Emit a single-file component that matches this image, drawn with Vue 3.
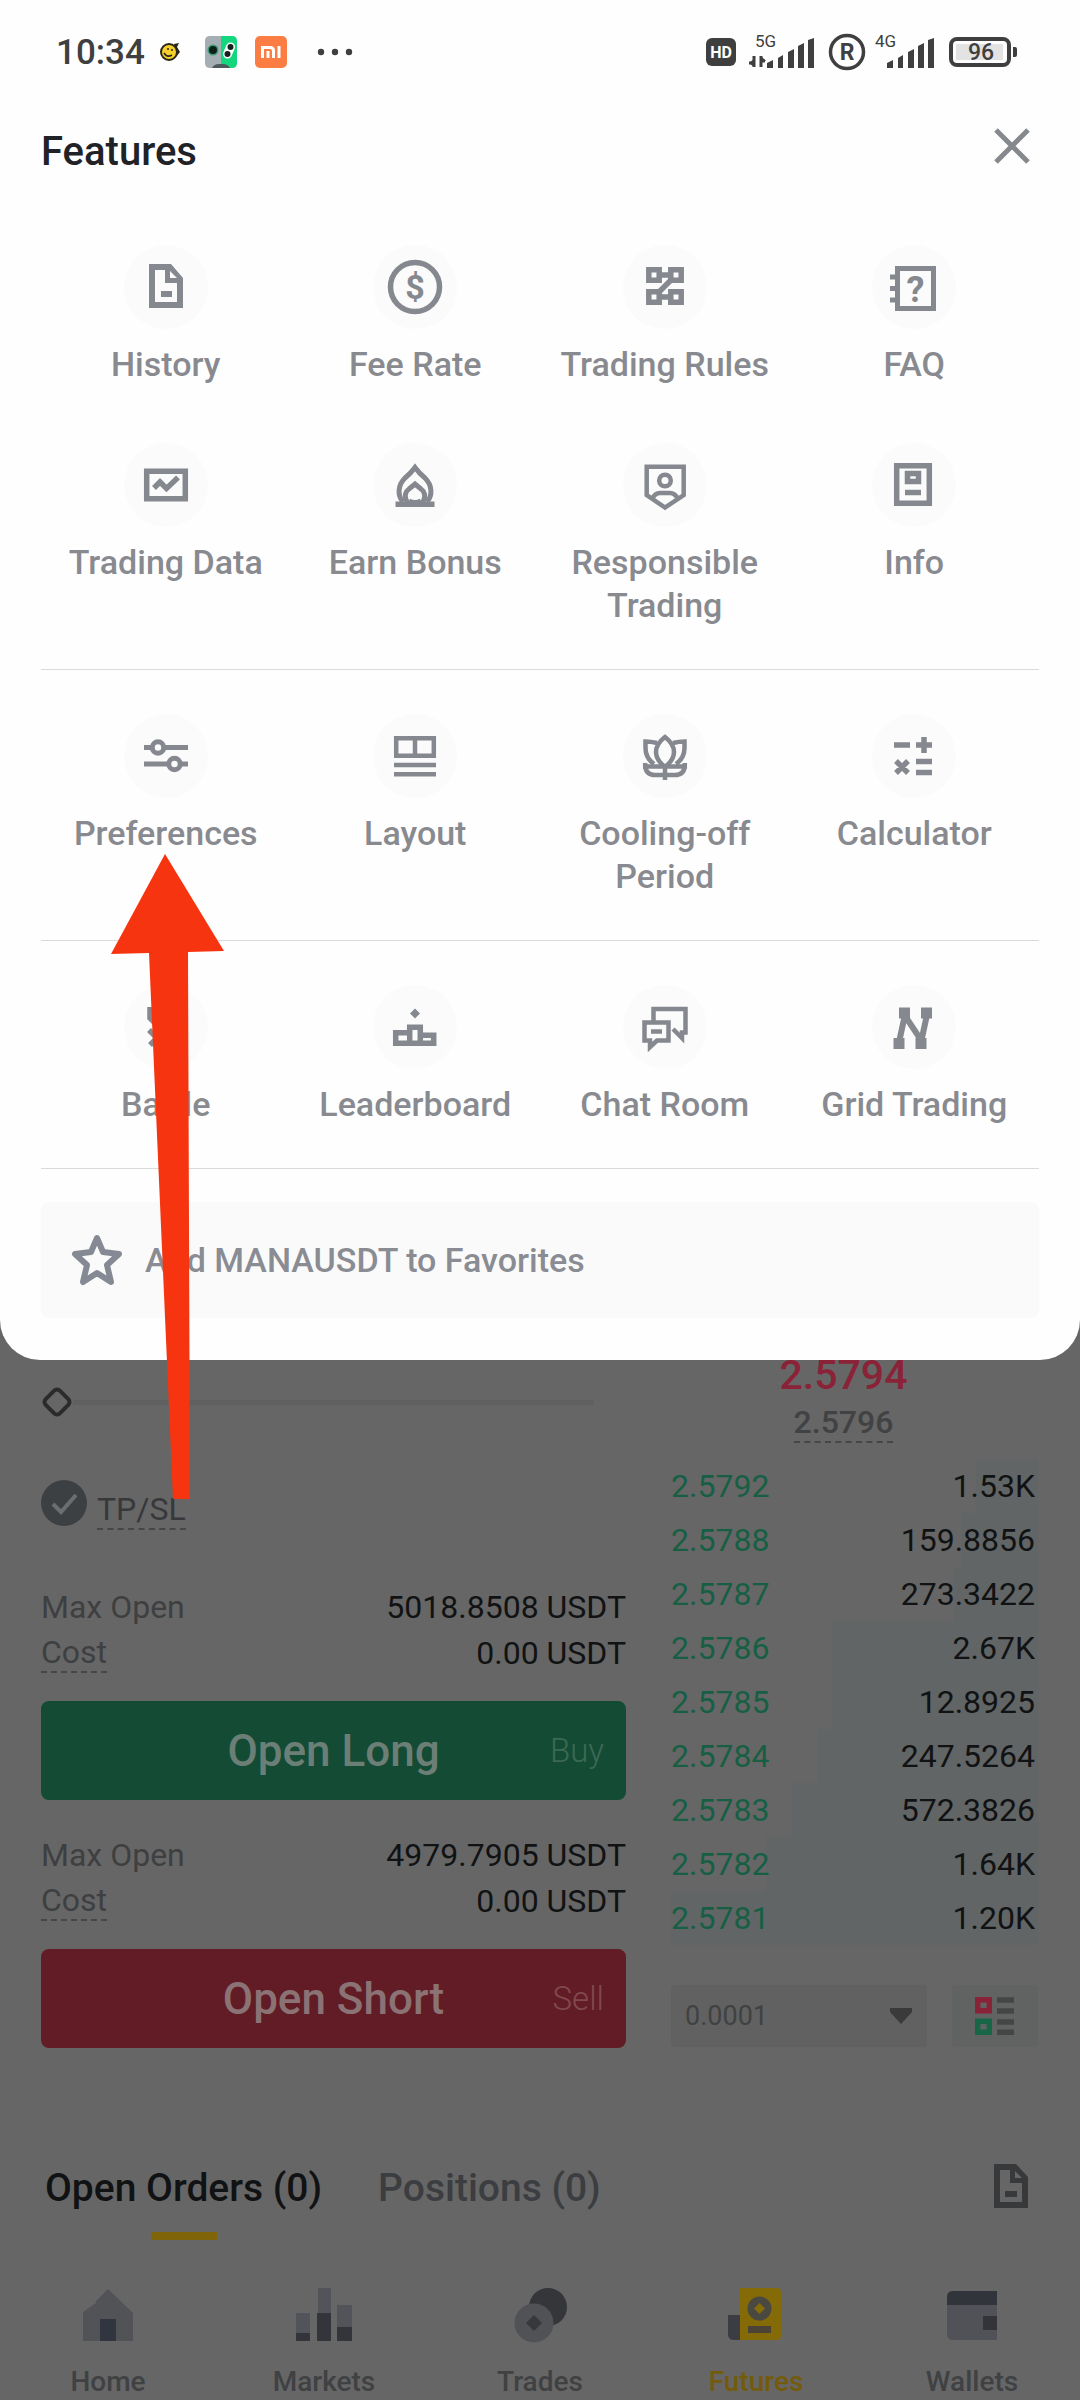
<script setup>
import { ref } from 'vue'

const sections = [
  [
    { icon: 'doc', label: 'History' },
    { icon: 'fee', label: 'Fee Rate' },
    { icon: 'rules', label: 'Trading Rules' },
    { icon: 'faq', label: 'FAQ' },
    { icon: 'data', label: 'Trading Data' },
    { icon: 'flame', label: 'Earn Bonus' },
    { icon: 'shield', label: 'Responsible Trading' },
    { icon: 'info', label: 'Info' },
  ],
  [
    { icon: 'prefs', label: 'Preferences' },
    { icon: 'layout', label: 'Layout' },
    { icon: 'lotus', label: 'Cooling-off Period' },
    { icon: 'calc', label: 'Calculator' },
  ],
  [
    { icon: 'battle', label: 'Battle' },
    { icon: 'podium', label: 'Leaderboard' },
    { icon: 'chat', label: 'Chat Room' },
    { icon: 'grid', label: 'Grid Trading' },
  ],
]

const tickets = [
  { max: '5018.8508 USDT', cost: '0.00 USDT', action: 'Open Long', side: 'Buy', tone: 'long' },
  { max: '4979.7905 USDT', cost: '0.00 USDT', action: 'Open Short', side: 'Sell', tone: 'short' },
]

const bids = [
  { price: '2.5792', size: '1.53K', depth: 17 },
  { price: '2.5788', size: '159.8856', depth: 21 },
  { price: '2.5787', size: '273.3422', depth: 23 },
  { price: '2.5786', size: '2.67K', depth: 56 },
  { price: '2.5785', size: '12.8925', depth: 56 },
  { price: '2.5784', size: '247.5264', depth: 60 },
  { price: '2.5783', size: '572.3826', depth: 67 },
  { price: '2.5782', size: '1.64K', depth: 74 },
  { price: '2.5781', size: '1.20K', depth: 100 },
]

const navItems = ['Home', 'Markets', 'Trades', 'Futures', 'Wallets']
const leverage = ref(0)
const tpsl = ref(true)
</script>

<template>
  <div class="app">
    <section class="sheet">
      <div class="status">
        <div class="status-left">
          <span class="clock">10:34</span>
          <svg class="smiley" width="22" height="22" viewBox="0 0 22 22">
            <path d="M15 3 L20 2 L18 6 L21 11 L17 16 Z" fill="#2b2718" />
            <circle cx="10" cy="11" r="8" fill="#f5d02c" stroke="#2b2718" stroke-width="2" />
            <circle cx="9" cy="8" r="1" fill="#2b2718" /><circle cx="13" cy="9" r="1" fill="#2b2718" />
            <path d="M5 12 Q8 17 13 14" fill="none" stroke="#2b2718" stroke-width="1.500" />
          </svg>
          <svg class="split" width="32" height="32" viewBox="0 0 32 32">
            <path d="M5 0 H16 V32 H5 Q0 32 0 27 V5 Q0 0 5 0" fill="#a5aeb3" />
            <path d="M16 0 H27 Q32 0 32 5 V27 Q32 32 27 32 H16" fill="#14d67c" />
            <circle cx="8" cy="14" r="5.500" fill="#3a9a72" /><circle cx="8" cy="14" r="4" fill="#0b2118" />
            <path d="M25.500 11 L22.500 18" stroke="#fff" stroke-width="9" stroke-linecap="round" />
            <circle cx="25.500" cy="11" r="3" fill="#14201b" /><circle cx="22.500" cy="18" r="3" fill="#14201b" />
            <path d="M7 32 Q9 28 14 28 H18 Q23 28 25 32Z" fill="#4d5a5c" />
          </svg>
          <svg class="mi" width="32" height="32" viewBox="0 0 32 32">
            <rect width="32" height="32" rx="5" fill="#fb7d44" />
            <path d="M7.500 22 V11.500 H15 Q18.500 11.500 18.500 15 V22 M13 15 V22 M24 10 V22" fill="none" stroke="#fff" stroke-width="3" />
          </svg>
          <svg class="dots" width="36" height="8" viewBox="0 0 36 8" fill="#3f3f3f">
            <circle cx="4" cy="4" r="3.200" /><circle cx="18" cy="4" r="3.200" /><circle cx="32" cy="4" r="3.200" />
          </svg>
        </div>
        <svg class="status-right" width="312" height="40" viewBox="0 0 312 40" fill="#3f3f3f">
          <rect x="0" y="6" width="30" height="28" rx="6" />
          <text x="15" y="26" font-size="16" font-weight="700" fill="#fff" text-anchor="middle">HD</text>
          <text x="49" y="15" font-size="17">5G</text>
          <path d="M48 24 V35 M43 31 H48 M55 24 V35 M55 29 H59" fill="none" stroke="#3f3f3f" stroke-width="3" />
          <path d="M43 31 L48 27 V35Z M55 24 L60 29 H55Z" />
          <path d="M61 31 L67 28 V36 H61Z M72 26 L77 23 V36 H72Z M82 20 L88 17 V36 H82Z M92 14 L98 11 V36 H92Z M102 8 L108 6 V36 H102Z" />
          <circle cx="141" cy="20" r="16.500" fill="none" stroke="#3f3f3f" stroke-width="3.500" />
          <text x="141" y="28" font-size="23" font-weight="700" text-anchor="middle">R</text>
          <text x="169" y="15" font-size="17">4G</text>
          <path d="M181 31 L187 28 V36 H181Z M192 26 L197 23 V36 H192Z M202 20 L208 17 V36 H202Z M212 14 L218 11 V36 H212Z M222 8 L228 6 V36 H222Z" />
          <rect x="245" y="7" width="58" height="26" rx="6" fill="none" stroke="#3f3f3f" stroke-width="4" />
          <rect x="250" y="12" width="47" height="16" fill="#e3e3e3" />
          <path d="M307 15 H309 Q311 15 311 17 V23 Q311 25 309 25 H307Z" />
          <text x="275" y="28" font-size="23" font-weight="500" text-anchor="middle">96</text>
        </svg>
      </div>

      <header class="head">
        <h1>Features</h1>
        <button class="close" aria-label="Close">
          <svg width="36" height="36" viewBox="0 0 36 36"><path d="M2 2 L34 34 M34 2 L2 34" stroke="#85888c" stroke-width="5" /></svg>
        </button>
      </header>

      <div v-for="(items, s) in sections" :key="s" class="section">
        <button v-for="item in items" :key="item.label" class="tile">
          <svg class="glyph" width="84" height="84" viewBox="0 0 84 84">
            <circle cx="42" cy="42" r="42" fill="#fbfbfc" />
            <g v-if="item.icon === 'doc'" fill="#85888e">
              <path fill-rule="evenodd" d="M25 19 H47 L59 33 V63 H25Z M31 25 V57 H53 V38 H41 V25Z M46 26 V33 H53Z" />
              <rect x="37" y="46" width="11" height="6" />
            </g>
            <g v-else-if="item.icon === 'fee'">
              <circle cx="42" cy="42" r="24.500" fill="none" stroke="#85888e" stroke-width="5.500" />
              <text x="42" y="54" font-size="34" font-weight="700" text-anchor="middle" fill="#85888e">$</text>
            </g>
            <g v-else-if="item.icon === 'rules'" fill="none" stroke="#85888e" stroke-width="5.500">
              <path d="M25.800 24.800 H36.200 V35.200 H25.800Z M47.800 24.800 H58.200 V35.200 H47.800Z M25.800 46.800 H36.200 V57.200 H25.800Z M47.800 46.800 H58.200 V57.200 H47.800Z" />
              <path d="M36 30 H48 M36 52 H48 M48 35 L36 47" />
            </g>
            <g v-else-if="item.icon === 'faq'">
              <rect x="25.500" y="23.500" width="36" height="40" fill="none" stroke="#85888e" stroke-width="5" />
              <path d="M18 32 H24 M18 43.500 H24 M18 55 H24" stroke="#85888e" stroke-width="5" />
              <text x="43.500" y="57" font-size="36" font-weight="700" text-anchor="middle" fill="#85888e">?</text>
            </g>
            <g v-else-if="item.icon === 'data'" fill="none" stroke="#85888e" stroke-width="5.500">
              <path d="M22.700 28.200 H61.300 V55.800 H22.700Z" />
              <path d="M30 45 L36 39 L42.500 45.500 L54 34.500" />
            </g>
            <g v-else-if="item.icon === 'flame'" fill="none" stroke="#85888e" stroke-width="5">
              <path d="M30 59 C24 52 25 42 32 35 Q38 30 42 24.500 Q46 30 52 35 C59 42 60 52 54 59" />
              <path d="M35 60 C30 53 33 48 36 46 L42 41 L48 46 C51 48 54 53 49 60" />
              <path d="M36 58 Q42 61 48 58" />
              <path d="M22.500 61.300 H61.500" stroke-width="5.500" />
            </g>
            <g v-else-if="item.icon === 'shield'" fill="none" stroke="#85888e" stroke-width="4.500">
              <path d="M23.700 23.700 H60.700 V52 L42 64.500 L23.700 52Z" />
              <circle cx="42" cy="37.500" r="5.800" />
              <path d="M29 56 Q32 50 37 50 H47 Q52 50 55 56" />
            </g>
            <g v-else-if="item.icon === 'info'" fill="none" stroke="#85888e" stroke-width="5.500">
              <path d="M24.700 22.700 H57.300 V60.300 H24.700Z" />
              <path d="M35.500 30.500 H46.500 V38.500 H35.500Z" />
              <path d="M33 49.500 H49" />
            </g>
            <g v-else-if="item.icon === 'prefs'" fill="none" stroke="#85888e" stroke-width="5">
              <path d="M20 33.500 H28 M40 33.500 H64 M20 50 H45 M56 50 H64" />
              <circle cx="34" cy="33.500" r="5.700" /><circle cx="50.500" cy="50" r="5.700" />
            </g>
            <g v-else-if="item.icon === 'layout'" fill="none" stroke="#85888e" stroke-width="4.500">
              <path d="M23.200 24.200 H60.800 V41.800 H23.200Z M42 24 V42 M21 51 H63 M21 60.300 H63" />
            </g>
            <g v-else-if="item.icon === 'lotus'" fill="none" stroke="#85888e" stroke-width="4.500">
              <path d="M42 23 Q33 30 33 38 Q33 46 42 53 Q51 46 51 38 Q51 30 42 23Z" />
              <path d="M34 29 Q28 27.500 22.500 27.500 V34 Q22.500 44 31 50 M50 29 Q56 27.500 61.500 27.500 V34 Q61.500 44 53 50" />
              <path d="M22.200 49 V52.500 H61.800 V49 M22.200 52 Q23 61 32 61 H52 Q61 61 61.800 52 M42 50 V66" />
            </g>
            <g v-else-if="item.icon === 'calc'" fill="none" stroke="#85888e" stroke-width="5.500">
              <path d="M22 31 H38 M44 31 H60 M52 23 V39 M24 47 L36 59 M36 47 L24 59 M44 47.500 H60 M44 58.500 H60" />
            </g>
            <g v-else-if="item.icon === 'battle'" fill="none" stroke="#85888e" stroke-width="5.500">
              <path d="M26 22 V33 L48 55 M58 22 V33 L36 55 M25 45 L38 58 M59 45 L46 58 M26 60 L33 53 M58 60 L51 53" />
            </g>
            <g v-else-if="item.icon === 'podium'" fill="none" stroke="#85888e" stroke-width="5.500">
              <path d="M42 23.500 L47 28.500 L42 33.500 L37 28.500Z" fill="#85888e" stroke="none" />
              <path d="M22.700 47.700 H36.700 V58.300 H22.700Z M36.700 42.200 H47.300 V58.300 H36.700Z M47.300 50.200 H60.700 V58.300 H47.300Z" />
            </g>
            <g v-else-if="item.icon === 'chat'" fill="none" stroke="#85888e" stroke-width="4.500">
              <path d="M30.500 36 V24 H62.500 V47.500 H59 V53 L50 44" />
              <path d="M21.500 37.500 H45.500 V55.500 H34 L27 62 V55.500 H21.500Z M28 46.500 H39" />
            </g>
            <g v-else fill="#85888e">
              <path d="M27 22.500 H38 V33.500 H27Z M49 22.500 H60 V33.500 H49Z M21.500 53 H32.500 V64 H21.500Z M43.500 53 H54.500 V64 H43.500Z" />
              <path d="M32.500 32 L27.500 55 M32.500 30 L49 55 M54.500 32 L49.500 55" fill="none" stroke="#85888e" stroke-width="6" />
            </g>
          </svg>
          <span>{{ item.label }}</span>
        </button>
      </div>

      <button class="favorite">
        <svg width="52" height="52" viewBox="0 0 52 52"><path d="M26 4 L32 18 L48 20 L36 31 L40 48 L26 39 L12 48 L16 31 L4 20 L20 18Z" fill="none" stroke="#858994" stroke-width="6" stroke-linejoin="round" /></svg>
        Add MANAUSDT to Favorites
      </button>
    </section>

    <main class="trade">
      <section class="form">
        <input v-model="leverage" class="slider" type="range" min="0" max="100" aria-label="Amount" />
        <div class="tpsl">
          <span class="tick">
            <input id="tpsl" v-model="tpsl" type="checkbox" />
            <svg width="46" height="46" viewBox="0 0 46 46"><path d="M12 24 L20 32 L35 15" fill="none" stroke="#6b6e71" stroke-width="4" /></svg>
          </span>
          <label for="tpsl" class="dashed">TP/SL</label>
        </div>
        <div v-for="t in tickets" :key="t.tone" class="ticket">
          <div class="row"><span>Max Open</span><b>{{ t.max }}</b></div>
          <div class="row"><span class="dashed">Cost</span><b>{{ t.cost }}</b></div>
          <button class="submit" :class="t.tone">
            <span></span><span>{{ t.action }}</span><small>{{ t.side }}</small>
          </button>
        </div>
      </section>

      <section class="book">
        <div class="ticker">
          <strong class="last">2.5794</strong>
          <span class="mark dashed">2.5796</span>
        </div>
        <table>
          <tbody>
            <tr v-for="b in bids" :key="b.price" :style="{ backgroundSize: b.depth + '% 100%' }">
              <td class="price">{{ b.price }}</td>
              <td class="size">{{ b.size }}</td>
            </tr>
          </tbody>
        </table>
        <div class="tools">
          <div class="picker">
            <select aria-label="Price grouping"><option>0.0001</option></select>
            <svg width="24" height="16" viewBox="0 0 24 16"><path d="M1 0 H23 V4 L12 16 L1 4Z" fill="#3a3a3b" /></svg>
          </div>
          <button class="view" aria-label="Order book view">
            <svg width="40" height="38" viewBox="0 0 40 38">
              <path d="M2.700 2.700 H14.300 V13.800 H2.700Z" fill="none" stroke="#8a2338" stroke-width="5.400" />
              <path d="M2.700 24.200 H14.300 V35.300 H2.700Z" fill="none" stroke="#176646" stroke-width="5.400" />
              <path d="M22 3 H39 M22 14 H39 M22 25 H39 M22 35.300 H39" stroke="#444546" stroke-width="5.400" />
            </svg>
          </button>
        </div>
      </section>
    </main>

    <div class="tabs">
      <button class="tab active">Open Orders (0)</button>
      <button class="tab">Positions (0)</button>
      <button class="orders" aria-label="Order history">
        <svg width="34" height="44" viewBox="0 0 34 44" fill="#37393a">
          <path fill-rule="evenodd" d="M0 0 H22 L34 13 V44 H0Z M6 6 V38 H28 V19 H16 V6Z M21 7 V14 H28Z" />
          <rect x="11" y="27" width="12" height="6" />
        </svg>
      </button>
    </div>

    <nav class="nav">
      <a v-for="n in navItems" :key="n" href="#" :class="{ current: n === 'Futures' }">
        <svg width="56" height="56" viewBox="0 0 56 56">
          <g v-if="n === 'Home'">
            <path d="M3 54 V25 L16 16 V14 L28 2 L53 26 V54Z" fill="#525356" />
            <rect x="20" y="32" width="16" height="22" fill="#303540" />
          </g>
          <g v-else-if="n === 'Markets'">
            <path d="M0 26 H14 V54 H0Z M22 1 H35 V54 H22Z M41 18 H56 V54 H41Z" fill="#525459" />
            <path d="M0 46 H14 V54 H0Z M21 26 H35 V54 H21Z M41 40 H56 V54 H41Z" fill="#34353b" />
          </g>
          <g v-else-if="n === 'Trades'">
            <circle cx="36" cy="20" r="19" fill="#34363a" />
            <circle cx="22" cy="36" r="19.500" fill="#505256" />
            <path d="M22 28 L30 36 L22 44 L14 36Z" fill="#36383b" />
          </g>
          <g v-else-if="n === 'Futures'">
            <path d="M0 28 H12 V53 H6 Q0 53 0 47Z" fill="#3b3d43" />
            <path d="M12 1 H49 Q53 1 53 5 V49 Q53 53 49 53 H12Z" fill="#856a08" />
            <circle cx="31.500" cy="21.500" r="12" fill="#4a4941" />
            <path d="M31.500 16 L37 21.500 L31.500 27 L26 21.500Z" fill="#856a08" />
            <rect x="20" y="39" width="23" height="7" fill="#4a4336" />
          </g>
          <g v-else>
            <path d="M3 10 Q3 4 9 4 H53 V53 H9 Q3 53 3 47Z" fill="#505257" />
            <path d="M3 18 V10 Q3 4 9 4 H53 V18Z" fill="#32343c" />
            <rect x="39" y="29" width="14" height="14" fill="#333439" />
          </g>
        </svg>
        <span>{{ n }}</span>
      </a>
    </nav>

    <svg class="pointer" width="114" height="646" viewBox="0 0 114 646">
      <path d="M54 0 L113 97 L77 98 L79 645 H62 L38 99 L0 100Z" fill="#f63410" />
    </svg>
  </div>
</template>

<style>
body { margin: 0; background: #666; }
</style>

<style scoped>
.app { position: relative; min-height: 100vh; background: #666; font-family: Roboto, "Liberation Sans", sans-serif; color: #111213; overflow: hidden; }
* { box-sizing: border-box; }
button { font: inherit; color: inherit; background: none; border: 0; padding: 0; margin: 0; }
svg { display: block; flex: none; }

.sheet { background: #fefefe; border-radius: 0 0 40px 40px; padding: 0 41px 42px; }
.status { display: flex; justify-content: space-between; align-items: center; height: 104px; padding: 0 21px 0 15px; }
.status-left { display: flex; align-items: center; }
.clock { font-size: 35px; color: #3f3f3f; font-weight: 500; }
.smiley { margin-left: 14px; }
.split { margin-left: 24px; }
.mi { margin-left: 18px; }
.dots { margin-left: 30px; }
.head { display: flex; justify-content: space-between; align-items: flex-start; height: 92px; padding: 24px 9px 0 0; margin-bottom: 49px; }
h1 { margin: 0; font-size: 40px; line-height: 48px; font-weight: 500; color: #202227; }

.section { display: grid; grid-template-columns: repeat(4, 1fr); row-gap: 57px; padding-bottom: 42px; border-bottom: 1px solid #d9dadb; margin-bottom: 44px; }
.section:last-of-type { margin-bottom: 33px; }
.tile { display: flex; flex-direction: column; align-items: center; gap: 14px; font-size: 34px; line-height: 43px; font-weight: 500; color: #888a90; padding: 0 20px; }
.favorite { display: flex; align-items: center; gap: 22px; width: 100%; height: 116px; padding: 0 30px; border-radius: 8px; background: #fafafa; color: #8a8c93; font-size: 34px; font-weight: 500; }

.trade { display: grid; grid-template-columns: 585fr 367fr; column-gap: 45px; padding: 0 42px 0 41px; font-size: 32px; line-height: 46px; }
.dashed { border-bottom: 2px dashed #454648; line-height: 38px; }

.slider { appearance: none; display: block; width: 100%; height: 44px; margin: 20px 0 56px; background: linear-gradient(#606060, #606060) no-repeat 32px 50% / calc(100% - 64px) 5px; }
.slider::-webkit-slider-thumb { appearance: none; width: 24px; height: 24px; margin-left: 4px; border: 4px solid #2b2b2c; border-radius: 6px; background: #666; transform: rotate(45deg); }
.tpsl { display: flex; align-items: flex-end; gap: 10px; height: 50px; margin-bottom: 54px; color: #37383a; }
.tick { position: relative; align-self: flex-start; width: 46px; height: 46px; }
.tick input { appearance: none; width: 46px; height: 46px; margin: 0; border-radius: 50%; background: #3d4043; display: block; }
.tick svg { position: absolute; inset: 0; pointer-events: none; }

.ticket { margin-bottom: 32px; }
.row { display: flex; justify-content: space-between; align-items: center; height: 46px; color: #3e3f41; }
.row b { font-weight: 400; color: #111213; }
.submit { display: grid; grid-template-columns: 1fr auto 1fr; align-items: center; width: 100%; height: 99px; margin-top: 25px; padding: 0 22px; border-radius: 8px; font-size: 44px; font-weight: 500; }
.submit small { justify-self: end; font-size: 33px; font-weight: 300; }
.long { background: #144b34; color: #6c7f76; }
.long small { color: #3b6954; }
.short { background: #621c25; color: #8a7275; }
.short small { color: #80484f; }

.ticker { display: flex; flex-direction: column; align-items: center; padding-right: 22px; }
.last { font-size: 41px; line-height: 38px; font-weight: 500; color: #8a2238; margin-top: -4px; }
.mark { font-weight: 500; color: #414244; margin-top: 9px; }
.book table { width: 100%; border-collapse: collapse; margin-top: 16px; }
.book tr { background: linear-gradient(#616565, #616565) no-repeat right center; }
.book td { height: 54px; padding: 0; }
.price { color: #175f44; }
.book .size { text-align: right; padding-right: 3px; }
.tools { display: flex; gap: 25px; width: 100%; margin-top: 40px; }
.picker { position: relative; flex: 1; display: flex; align-items: center; }
.picker svg { position: absolute; right: 14px; pointer-events: none; }
select { appearance: none; width: 100%; height: 62px; border: 0; border-radius: 4px; padding: 0 14px; background: #616161; color: #404142; font: 27px Roboto, sans-serif; }
.view { display: flex; align-items: center; justify-content: center; width: 86px; height: 62px; border-radius: 4px; background: #616262; }

.tabs { display: flex; align-items: flex-start; gap: 56px; padding: 0 52px 0 45px; margin-top: 84px; }
.tab { position: relative; font-size: 39px; line-height: 48px; font-weight: 500; color: #3b3d40; padding-bottom: 28px; }
.tab.active { color: #111213; }
.active::after { content: ""; position: absolute; bottom: 0; left: calc(50% - 33px); width: 66px; height: 8px; background: #7f6409; }
.orders { margin-left: auto; }
.nav { display: grid; grid-template-columns: repeat(5, 1fr); margin-top: 47px; }
.nav a { display: flex; flex-direction: column; align-items: center; gap: 22px; font-size: 28px; line-height: 33px; font-weight: 500; color: #404143; text-decoration: none; }
.nav .current { color: #745b0b; }

.pointer { position: absolute; left: 111px; top: 854px; }
</style>
